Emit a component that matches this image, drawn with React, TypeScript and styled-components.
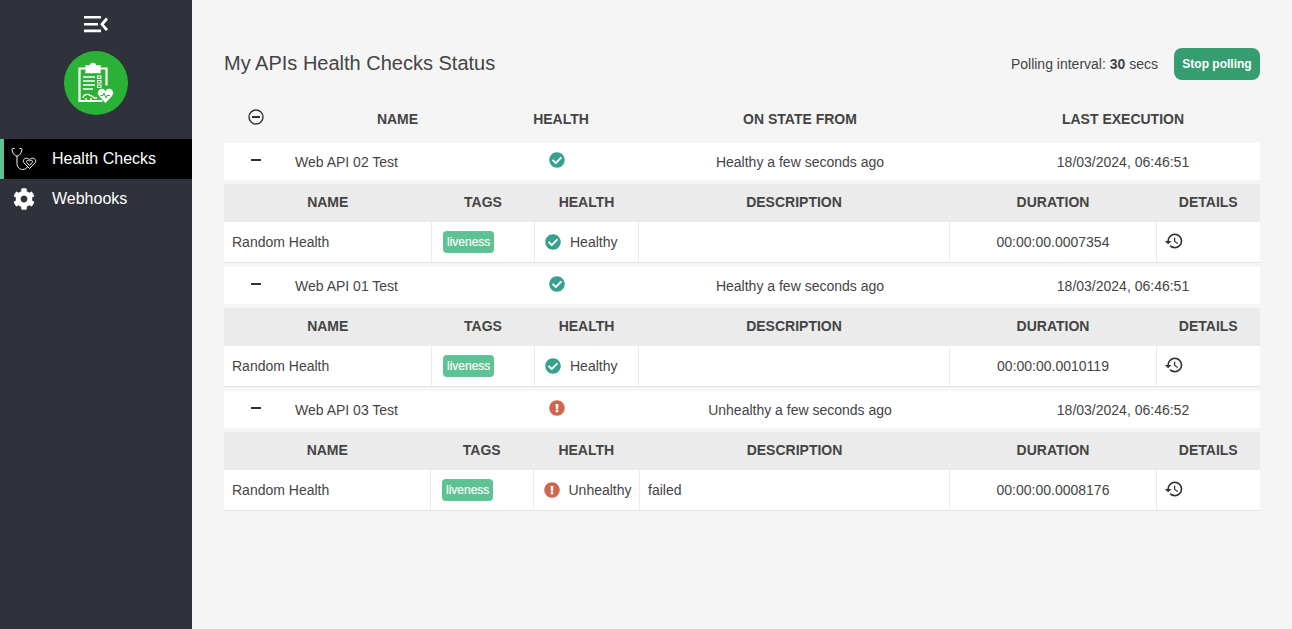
import React from 'react';
import styled, { createGlobalStyle } from 'styled-components';
import { FaCheckCircle, FaCog, FaExclamationCircle } from 'react-icons/fa';
import { MdHistory } from 'react-icons/md';

interface Entry {
  name: string;
  status: 'Healthy' | 'Unhealthy';
  since: string;
  lastExecution: string;
  duration: string;
  description: string;
  widths: number[];
}

const entries: Entry[] = [
  {
    name: 'Web API 02 Test',
    status: 'Healthy',
    since: 'Healthy a few seconds ago',
    lastExecution: '18/03/2024, 06:46:51',
    duration: '00:00:00.0007354',
    description: '',
    widths: [207.5, 103, 104, 311, 207, 103.5],
  },
  {
    name: 'Web API 01 Test',
    status: 'Healthy',
    since: 'Healthy a few seconds ago',
    lastExecution: '18/03/2024, 06:46:51',
    duration: '00:00:00.0010119',
    description: '',
    widths: [207.5, 103, 104, 311, 207, 103.5],
  },
  {
    name: 'Web API 03 Test',
    status: 'Unhealthy',
    since: 'Unhealthy a few seconds ago',
    lastExecution: '18/03/2024, 06:46:52',
    duration: '00:00:00.0008176',
    description: 'failed',
    widths: [206.5, 102.5, 106.5, 310, 207, 103.5],
  },
];

const GlobalStyle = createGlobalStyle`
  html, body {
    margin: 0;
    padding: 0;
    height: 100%;
  }

  body {
    font-family: 'Liberation Sans', Arial, sans-serif;
    font-size: 14px;
    color: #444;
    background: #f5f5f5;
  }
`;

const Layout = styled.div`
  display: flex;
  height: 629px;
  overflow: hidden;
`;

const Sidebar = styled.aside`
  width: 192px;
  flex-shrink: 0;
  background: #2f323b;
  color: #fff;
`;

const MenuToggle = styled.div`
  display: flex;
  justify-content: center;
  padding-top: 15px;
  height: 36px;
`;

const LogoCircle = styled.div`
  width: 64px;
  height: 64px;
  margin: 0 auto 24px;
  border-radius: 50%;
  background: #2bb135;
  display: flex;
  align-items: center;
  justify-content: center;
`;

const NavItem = styled.div<{ $active?: boolean }>`
  display: flex;
  align-items: center;
  height: 40px;
  padding-left: ${(p) => (p.$active ? '4px' : '8px')};
  background: ${(p) => (p.$active ? '#000' : 'transparent')};
  border-left: ${(p) => (p.$active ? '4px solid #5dc294' : '0')};
  font-size: 16px;
  color: #fff;
`;

const NavIcon = styled.span`
  width: 32px;
  margin-right: 12px;
  display: flex;
  justify-content: center;
`;

const Main = styled.main`
  flex: 1;
  padding: 48px 32px 0;
`;

const TopBar = styled.div`
  display: flex;
  align-items: center;
  justify-content: space-between;
  height: 32px;
  margin-bottom: 20px;
`;

const Title = styled.h1`
  margin: 0 0 2px;
  font-size: 20px;
  font-weight: 400;
  color: #444;
`;

const Polling = styled.div`
  display: flex;
  align-items: center;
  gap: 16px;
`;

const StopButton = styled.button`
  width: 86px;
  height: 32px;
  padding: 0;
  border: 0;
  border-radius: 8px;
  background: #369d71;
  color: #fff;
  font-family: inherit;
  font-size: 12px;
  font-weight: 700;
`;

const Table = styled.table`
  width: 1036px;
  border-collapse: collapse;
  table-layout: fixed;
`;

const HeadCell = styled.th`
  height: 43px;
  padding: 0 0 6px;
  box-sizing: border-box;
  font-size: 14px;
  font-weight: 700;
  text-align: center;
  color: #444;
  vertical-align: middle;
`;

const OuterRow = styled.tr`
  background: #fff;
`;

const OuterCell = styled.td<{ $align?: string }>`
  height: 37px;
  padding: 0;
  box-sizing: border-box;
  text-align: ${(p) => p.$align ?? 'center'};
`;

const ExpandedCell = styled.td`
  padding: 4px 0;
`;

const NameText = styled.span`
  padding-left: 8px;
`;

const IconSlot = styled.span`
  display: inline-flex;
  vertical-align: middle;
  margin: -6px 8px 0 0;
`;

const StatusIcon = styled.span<{ $ok: boolean }>`
  display: inline-flex;
  font-size: 16px;
  color: ${(p) => (p.$ok ? '#37a08f' : '#cf6650')};
`;

const DetailTable = styled(Table)`
  background: #fff;
`;

const DetailHead = styled.th`
  height: 38px;
  padding: 0 0 2px;
  box-sizing: border-box;
  background: #ebebeb;
  font-size: 14px;
  font-weight: 700;
  color: #444;
  text-align: center;
`;

const DetailCell = styled.td<{ $center?: boolean }>`
  height: 40px;
  padding: 0 8px;
  border-left: 1px solid #ebebeb;
  border-bottom: 1px solid #e4e4e4;
  text-align: ${(p) => (p.$center ? 'center' : 'left')};

  &:first-child {
    border-left: 0;
  }
`;

const Tag = styled.span`
  display: inline-block;
  margin-left: 3px;
  padding: 0 4px;
  height: 22px;
  line-height: 23px;
  border-radius: 4px;
  background: #5dc294;
  color: #fff;
  font-size: 12px;
  -webkit-text-stroke: 0.15px #fff;
`;

const HealthWrap = styled.div`
  display: flex;
  align-items: center;
  gap: 9px;
  padding-left: 2px;
  white-space: nowrap;
`;

const HistoryIcon = styled.span`
  display: inline-flex;
  margin: 0 0 0 -1px;
  font-size: 20px;
  color: #333;
`;

const MenuIcon = () => (
  <svg width="26" height="18" viewBox="0 0 26 18">
    <path d="M1 1h17v2.600H1zM1 8h14v2.600H1zM1 14.600h17v2.600H1z" fill="#fff" />
    <path d="M24 3.500 19 9.300l5 5.800" fill="none" stroke="#fff" strokeWidth="2.800" />
  </svg>
);

const Logo = () => (
  <svg width="64" height="64" viewBox="0 0 64 64">
    <g fill="none" stroke="#fff" strokeWidth="1.300">
      <path d="M22 17.500h-6.500v32.500h23" strokeWidth="2.200" />
      <path d="M36 17.500h6.500v17" strokeWidth="2.200" />
      <path d="M22 15h4.500a2.500 2.500 0 0 1 5 0H36v6.500H22z" fill="#fff" />
      <path d="M19 26h12M19 30h12M19 34h12M19 38h10" />
      <path d="M33.500 25h3.500v2.500h-3.500zM33.500 29.500h3.500v2.500h-3.500zM33.500 34h3.500v2.500h-3.500z" strokeWidth="1.100" />
      <path d="M19 47c.5-4 5.500-4.500 7-2.500 2 0 3 1 4 2.500h3M21 48h2M26 48h2" />
    </g>
    <path
      d="M41.500 52.500 34.500 45c-3.700-5.500 3.500-11 7-5.500 3.500-5.500 10.700 0 7 5.500z"
      fill="#fff"
      stroke="#2bb135"
      strokeWidth="1"
    />
    <path d="M36.500 44.500h2.500l1-2.500 2 5 1-2.500h3" fill="none" stroke="#2bb135" strokeWidth="1" />
  </svg>
);

const StethoscopeIcon = () => (
  <svg width="26" height="24" viewBox="0 0 26 24" fill="none" stroke="#fff" strokeWidth="1">
    <path d="M3.500 1.500H1.800c-.8 0-1 .5-.8 1.300.6 3.400 2.500 6.200 5 6.200s4.300-2.800 4.900-6.200c.2-.8 0-1.300-.8-1.300H8.500" />
    <path d="M6 9v7.500c0 3.500 2.500 6 5.500 6s4-1.500 5-2.500" />
    <path d="M18.500 21.500 13 15.800c-2.300-3 1.700-6.600 5.500-3.300 3.800-3.300 7.800.3 5.500 3.300z" />
    <path d="M18.500 18.500 15.800 15.500c-1-1.700.9-3.100 2.700-1.500 1.800-1.600 3.700-.2 2.700 1.500z" />
  </svg>
);

const CollapseAllIcon = () => (
  <svg width="18" height="18" viewBox="0 0 18 18" fill="none" stroke="#333">
    <circle cx="9" cy="9" r="7" strokeWidth="1.400" />
    <path d="M5 9h8" strokeWidth="2" />
  </svg>
);

const MinusIcon = () => (
  <svg width="14" height="14" viewBox="0 0 14 14">
    <path d="M2 6h10v2H2z" fill="#333" />
  </svg>
);

const Status = ({ ok }: { ok: boolean }) => (
  <StatusIcon $ok={ok}>{ok ? <FaCheckCircle /> : <FaExclamationCircle />}</StatusIcon>
);

const App: React.FC = () => {
  return (
    <Layout>
      <GlobalStyle />
      <Sidebar>
        <MenuToggle>
          <MenuIcon />
        </MenuToggle>
        <LogoCircle>
          <Logo />
        </LogoCircle>
        <NavItem $active>
          <NavIcon>
            <StethoscopeIcon />
          </NavIcon>
          Health Checks
        </NavItem>
        <NavItem>
          <NavIcon>
            <FaCog size={22} />
          </NavIcon>
          Webhooks
        </NavItem>
      </Sidebar>
      <Main>
        <TopBar>
          <Title>My APIs Health Checks Status</Title>
          <Polling>
            <span>
              Polling interval: <b>30</b> secs
            </span>
            <StopButton>Stop polling</StopButton>
          </Polling>
        </TopBar>
        <Table>
          <colgroup>
            <col width={63} />
            <col width={221} />
            <col width={106} />
            <col width={372} />
            <col width={274} />
          </colgroup>
          <thead>
            <tr>
              <HeadCell>
                <CollapseAllIcon />
              </HeadCell>
              <HeadCell>NAME</HeadCell>
              <HeadCell>HEALTH</HeadCell>
              <HeadCell>ON STATE FROM</HeadCell>
              <HeadCell>LAST EXECUTION</HeadCell>
            </tr>
          </thead>
          <tbody>
            {entries.map((entry) => {
              const ok = entry.status === 'Healthy';
              return (
                <React.Fragment key={entry.name}>
                  <OuterRow>
                    <OuterCell>
                      <MinusIcon />
                    </OuterCell>
                    <OuterCell $align="left">
                      <NameText>{entry.name}</NameText>
                    </OuterCell>
                    <OuterCell>
                      <IconSlot>
                        <Status ok={ok} />
                      </IconSlot>
                    </OuterCell>
                    <OuterCell>{entry.since}</OuterCell>
                    <OuterCell>{entry.lastExecution}</OuterCell>
                  </OuterRow>
                  <tr>
                    <ExpandedCell colSpan={5}>
                      <DetailTable>
                        <colgroup>
                          {entry.widths.map((w, i) => (
                            <col key={i} width={w} />
                          ))}
                        </colgroup>
                        <thead>
                          <tr>
                            <DetailHead>NAME</DetailHead>
                            <DetailHead>TAGS</DetailHead>
                            <DetailHead>HEALTH</DetailHead>
                            <DetailHead>DESCRIPTION</DetailHead>
                            <DetailHead>DURATION</DetailHead>
                            <DetailHead>DETAILS</DetailHead>
                          </tr>
                        </thead>
                        <tbody>
                          <tr>
                            <DetailCell>Random Health</DetailCell>
                            <DetailCell>
                              <Tag>liveness</Tag>
                            </DetailCell>
                            <DetailCell>
                              <HealthWrap>
                                <Status ok={ok} />
                                {entry.status}
                              </HealthWrap>
                            </DetailCell>
                            <DetailCell>{entry.description}</DetailCell>
                            <DetailCell $center>{entry.duration}</DetailCell>
                            <DetailCell>
                              <HistoryIcon>
                                <MdHistory />
                              </HistoryIcon>
                            </DetailCell>
                          </tr>
                        </tbody>
                      </DetailTable>
                    </ExpandedCell>
                  </tr>
                </React.Fragment>
              );
            })}
          </tbody>
        </Table>
      </Main>
    </Layout>
  );
};

export default App;
